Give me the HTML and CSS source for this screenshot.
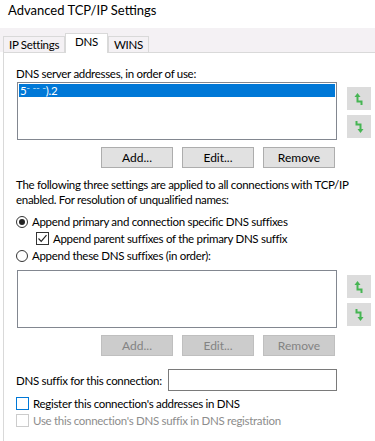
FILE: index.html
```html
<!DOCTYPE html>
<html lang="en">
<head>
    <meta charset="UTF-8">
    <title>Advanced TCP/IP Settings</title>
    <link rel="stylesheet" href="styles.css">
</head>
<body>
    <div class="title">Advanced TCP/IP Settings</div>

    <div class="tabs">
        <div class="tab">IP Settings</div>
        <div class="tab active">DNS</div>
        <div class="tab">WINS</div>
    </div>

    <div class="panel">
        <div class="label first">DNS server addresses, in order of use:</div>
        <div class="list-row">
            <div class="listbox">
                <div class="item selected">5&#8315; &#8315;&#8315; &#8315;).2</div>
            </div>
            <div class="arrows">
                <button class="arrow" type="button">
                    <svg width="10" height="14" viewBox="0 0 10 14"><path d="M3.5 1 L0.5 5 H2.5 V10.5 H6.5 V13 H8.5 V8.5 H4.5 V5 H6.5 Z" fill="#46b553"/></svg>
                </button>
                <button class="arrow" type="button">
                    <svg width="10" height="14" viewBox="0 0 10 14"><path d="M1.5 1 H3.5 V3.5 H7.5 V9 H9.5 L6.5 13 L3.5 9 H5.5 V5.5 H1.5 Z" fill="#46b553"/></svg>
                </button>
            </div>
        </div>
        <div class="btn-row">
            <button class="btn" type="button">Add...</button>
            <button class="btn" type="button">Edit...</button>
            <button class="btn" type="button">Remove</button>
        </div>

        <p class="note">The following three settings are applied to all connections with TCP/IP<br>enabled. For resolution of unqualified names:</p>

        <div class="option">
            <span class="radio checked"></span>Append primary and connection specific DNS suffixes
        </div>
        <div class="option indent">
            <span class="check">
                <svg width="11" height="11" viewBox="0 0 11 11"><path d="M1.5 5.5 L4.2 8.3 L9.5 2.2" fill="none" stroke="#222" stroke-width="1.2"/></svg>
            </span>Append parent suffixes of the primary DNS suffix
        </div>
        <div class="option">
            <span class="radio"></span>Append these DNS suffixes (in order):
        </div>

        <div class="list-row second">
            <div class="listbox"></div>
            <div class="arrows">
                <button class="arrow" type="button">
                    <svg width="10" height="14" viewBox="0 0 10 14"><path d="M3.5 1 L0.5 5 H2.5 V10.5 H6.5 V13 H8.5 V8.5 H4.5 V5 H6.5 Z" fill="#46b553"/></svg>
                </button>
                <button class="arrow" type="button">
                    <svg width="10" height="14" viewBox="0 0 10 14"><path d="M1.5 1 H3.5 V3.5 H7.5 V9 H9.5 L6.5 13 L3.5 9 H5.5 V5.5 H1.5 Z" fill="#46b553"/></svg>
                </button>
            </div>
        </div>
        <div class="btn-row">
            <button class="btn disabled" type="button">Add...</button>
            <button class="btn disabled" type="button">Edit...</button>
            <button class="btn disabled" type="button">Remove</button>
        </div>

        <div class="suffix-row">
            <span class="suffix-label">DNS suffix for this connection:</span>
            <input class="suffix-input" type="text">
        </div>

        <div class="option reg">
            <span class="check blue"></span>Register this connection's addresses in DNS
        </div>
        <div class="option grey">
            <span class="check faded"></span>Use this connection's DNS suffix in DNS registration
        </div>
    </div>
</body>
</html>
```

FILE: styles.css
```css
/* Windows dialog look */
body {
    margin: 0;
    font-family: Lato, "Noto Sans", sans-serif;
    font-size: 11.5px;
    letter-spacing: -0.3px;
    color: #000;
    background: #fff;
}

.title {
    height: 28px;
    padding-left: 8px;
    font-size: 13px;
    letter-spacing: 0;
    line-height: 20px;
}

/* Tab strip */
.tabs {
    display: flex;
    align-items: flex-end;
    height: 24px;
    padding-left: 3px;
    background: #f4f1f4;
}

.tab {
    height: 15px;
    line-height: 15px;
    padding: 0 5px;
    border: 1px solid #d9d9d9;
    border-bottom: none;
    background: #f4f1f4;
}

.tab.active {
    position: relative;
    height: 19px;
    line-height: 16px;
    margin-bottom: -1px;
    padding: 0 9px;
    background: #fff;
}

.panel {
    margin-left: 3px;
    padding: 0 0 20px 12px;
    border-top: 1px solid #d9d9d9;
    border-left: 1px solid #d9d9d9;
    min-height: 380px;
}

.label {
    line-height: 15px;
}

.label.first {
    padding-top: 13px;
    margin-bottom: 1px;
}

/* List boxes with move buttons */
.list-row {
    display: flex;
    gap: 10px;
}

.list-row.second {
    margin-top: 6px;
}

.listbox {
    width: 318px;
    height: 56px;
    margin-left: 1px;
    border: 1px solid #828790;
    background: #fff;
}

.item {
    height: 13px;
    margin: 1px;
    padding-left: 1px;
    line-height: 13px;
    color: #fff;
}

.item.selected {
    background: #0078d7;
}

.arrows {
    display: flex;
    flex-direction: column;
    gap: 5px;
    padding-top: 5px;
}

.arrow {
    width: 24px;
    height: 23px;
    padding: 0;
    border: none;
    background: #dcdcdc;
    display: flex;
    align-items: center;
    justify-content: center;
}

.btn-row {
    display: flex;
    justify-content: flex-end;
    gap: 9px;
    width: 319px;
    margin-top: 7px;
}

.btn {
    width: 72px;
    height: 21px;
    padding: 0;
    font-family: inherit;
    font-size: 12px;
    color: #000;
    background: #e1e1e1;
    border: 1px solid #adadad;
}

.btn.disabled {
    color: #838383;
    background: #cccccc;
    border-color: #bfbfbf;
}

.note {
    margin: 9px 0 6px;
    line-height: 15px;
    white-space: nowrap;
}

/* Radios and check boxes */
.option {
    display: flex;
    align-items: center;
    height: 17px;
    line-height: 15px;
}

.option.indent {
    padding-left: 20px;
}

.radio {
    box-sizing: border-box;
    width: 12px;
    height: 12px;
    margin-right: 4px;
    border: 1px solid #333;
    border-radius: 50%;
    position: relative;
}

.radio.checked::after {
    content: "";
    position: absolute;
    left: 2px;
    top: 2px;
    width: 6px;
    height: 6px;
    border-radius: 50%;
    background: #222;
}

.check {
    box-sizing: border-box;
    width: 13px;
    height: 13px;
    margin-right: 4px;
    border: 1px solid #333;
    display: flex;
    align-items: center;
    justify-content: center;
    background: #fff;
}

.check.blue {
    border-color: #0078d7;
}

.check.faded {
    border-color: #cccccc;
}

.option.grey {
    color: #8d8d8d;
}

.suffix-row {
    display: flex;
    align-items: center;
    margin-top: 13px;
}

.suffix-label {
    flex-shrink: 0;
    width: 152px;
    white-space: nowrap;
}

.suffix-input {
    box-sizing: border-box;
    width: 169px;
    height: 22px;
    margin: 0;
    border: 1px solid #7a7a7a;
}

.option.reg {
    margin-top: 4px;
}
```
